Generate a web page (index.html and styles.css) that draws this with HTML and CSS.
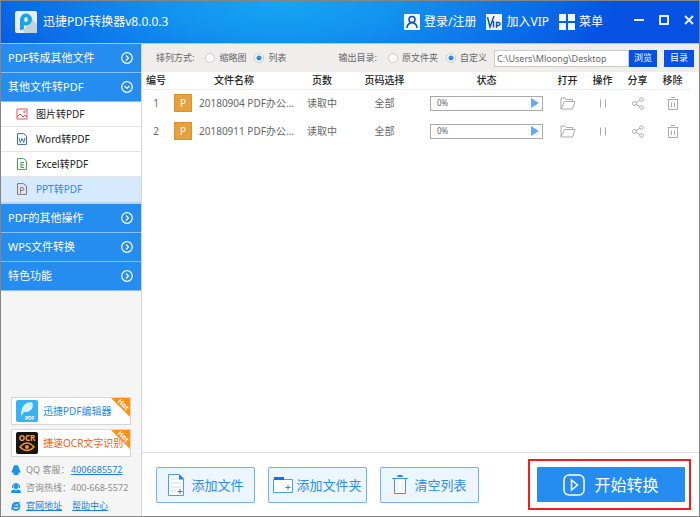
FILE: index.html
```html
<!DOCTYPE html>
<html lang="zh-CN">
<head>
    <meta charset="UTF-8">
    <meta name="viewport" content="width=device-width, initial-scale=1.0">
    <title>迅捷PDF转换器</title>
    <link rel="stylesheet" href="styles.css">
</head>
<body>
<!-- shared icons -->
<svg class="sprite" aria-hidden="true">
    <symbol id="right" viewBox="0 0 12 12"><circle cx="6" cy="6" r="5.3"/><path d="M5 3.5 7.5 6 5 8.5"/></symbol>
    <symbol id="down" viewBox="0 0 12 12"><circle cx="6" cy="6" r="5.3"/><path d="M3.5 5 6 7.5 8.5 5"/></symbol>
    <symbol id="open" viewBox="0 0 16 13"><path d="M1 12V1h4l1.500 1.500h6V4.500M1 12l3.500-7.500h10.500L12.500 12z"/></symbol>
    <symbol id="pause" viewBox="0 0 16 13"><path d="M5.500 2.500v8M10.500 2.500v8"/></symbol>
    <symbol id="share" viewBox="0 0 16 13"><circle cx="4.500" cy="6.500" r="2"/><circle cx="11.500" cy="2.500" r="1.800"/><circle cx="11.500" cy="10.500" r="1.800"/><path d="M6.300 5.600 9.900 3.400M6.300 7.500l3.700 2.100"/></symbol>
    <symbol id="trash" viewBox="0 0 16 13"><path d="M2.500 2.500h11M6 .5h4M3.500 2.500v10h9v-10M6.500 5.500V10M9.500 5.500V10"/></symbol>
    <symbol id="hot" viewBox="0 0 19 19"><path d="M0 0h19v19z" fill="#fb9214"/><text x="12.500" y="9" font-size="7" font-weight="bold" text-anchor="middle" fill="#fff" transform="rotate(45 12.500 6.500)">Hot</text></symbol>
</svg>
<div class="app">
    <header class="header">
        <svg class="logo" viewBox="0 0 22 22"><rect width="22" height="22" rx="2" fill="#e8f0f7"/><path d="m15 13 2-5 5 5v9H10l-2-3z" fill="#c3d1dd"/><path d="M5 19V8.500a6 6 0 1 1 7 6q-2 .5-3-.5v3q0 2-4 2z" fill="#18a5ec"/><ellipse cx="11" cy="8.500" rx="1.800" ry="2.500" fill="#e8f0f7"/></svg>
        <h1>迅捷PDF转换器v8.0.0.3</h1>
        <nav class="top-links">
            <a href="#"><svg width="16" height="16" viewBox="0 0 16 16"><path fill="#eef6ff" d="M0 0h16v16H0z"/><g fill="none" stroke="#104fae" stroke-width="1.500"><circle cx="8" cy="5.500" r="3"/><path d="M3 14q0-4.500 5-5.500 5 1 5 5.500"/></g></svg>登录/注册</a>
            <a href="#"><svg width="16" height="16" viewBox="0 0 16 16"><path fill="#eef6ff" d="M0 0h16v16H0z"/><path fill="none" stroke="#104fae" stroke-width="1.400" d="m1.500 3 2.500 10L8 2M7.500 7v6.500M10.500 14V8.500h2.500q2.500 1.500 0 3h-2.500"/></svg>加入VIP</a>
            <a href="#"><svg width="16" height="16" viewBox="0 0 16 16"><path fill="#eef6ff" d="M0 0h7v7H0zM9 0h7v7H9zM0 9h7v7H0zM9 9h7v7H9z"/></svg>菜单</a>
        </nav>
        <div class="window-buttons">
            <button aria-label="最小化"><svg viewBox="0 0 10 10"><path d="M0 5h10"/></svg></button>
            <button aria-label="最大化"><svg viewBox="0 0 10 10"><path d="M1 1h8v8H1z"/></svg></button>
            <button aria-label="关闭"><svg viewBox="0 0 10 10"><path d="m1 1 8 8M9 1 1 9"/></svg></button>
        </div>
    </header>

    <div class="body">
        <aside class="sidebar">
            <nav class="menu">
                <button class="menu-title">PDF转成其他文件<svg><use href="#right"/></svg></button>
                <button class="menu-title" aria-expanded="true">其他文件转PDF<svg><use href="#down"/></svg></button>
                <ul class="submenu">
                    <li><a href="#"><svg viewBox="0 0 12 12" stroke="#e0525a"><path d="M1 1h10v10H1zM1 9l3-3 3 3 2-2 2 2"/><circle cx="8.500" cy="3.800" r=".8"/></svg>图片转PDF</a></li>
                    <li><a href="#"><svg viewBox="0 0 12 12" stroke="#3d6cac"><path d="M1.500 11.400V.6h6L10.500 3v8.400zM3 5l1.300 4.500L6 5.500l1.700 4L9 5"/></svg>Word转PDF</a></li>
                    <li><a href="#"><svg viewBox="0 0 12 12" stroke="#43a552"><path d="M1.500 11.400V.6h6L10.500 3v8.400zM8 4.500H5v5h3M5 7h3"/></svg>Excel转PDF</a></li>
                    <li class="active"><a href="#"><svg viewBox="0 0 12 12" stroke="#8c7464"><path d="M1.500 11.400V.6h6L10.500 3v8.400zM4.500 10V4.500H7q2 1.500 0 3H4.500"/></svg>PPT转PDF</a></li>
                </ul>
                <button class="menu-title">PDF的其他操作<svg><use href="#right"/></svg></button>
                <button class="menu-title">WPS文件转换<svg><use href="#right"/></svg></button>
                <button class="menu-title">特色功能<svg><use href="#right"/></svg></button>
            </nav>

            <div class="side-bottom">
                <a class="promo" href="#">
                    <svg viewBox="0 0 22 22"><rect width="22" height="22" rx="2" fill="#36b3f5"/><path d="M5 16C5 6 9 2 16 2c3 6-2 11-8 10l5-6-8 10z" fill="#d9f2ff"/><text x="9" y="20" font-size="5" font-weight="bold" fill="#fff">PDF</text></svg>
                    <span>迅捷PDF编辑器</span>
                    <svg class="hot"><use href="#hot"/></svg>
                </a>
                <a class="promo ocr" href="#">
                    <svg viewBox="0 0 22 22"><rect width="22" height="22" rx="2" fill="#151515"/><text x="11" y="9" font-size="8" font-weight="bold" text-anchor="middle" fill="#f7a04b">OCR</text><path d="M4 15q7-8 14 0-7 7-14 0z" fill="none" stroke="#f7942d" stroke-width="1.500"/><circle cx="11" cy="15" r="2" fill="#f7942d"/></svg>
                    <span>捷速OCR文字识别</span>
                    <svg class="hot"><use href="#hot"/></svg>
                </a>
                <ul class="contact">
                    <li><svg viewBox="0 0 10 10"><path d="M5 0C3 0 2 1.500 2 3.500L.5 6.500 1 8l1-.5L3 9l-1 1h6L7 9l1-1.500 1 .5.500-1.500L8 3.500C8 1.500 7 0 5 0z"/></svg><span>QQ 客服：</span><a href="#">4006685572</a></li>
                    <li><svg viewBox="0 0 10 10"><circle cx="5" cy="3.500" r="2.500"/><path d="M0 10q0-3.500 3-3.500l2 1 2-1q3 0 3 3.500z"/><path d="M1.500 5V3Q2 .5 5 .5T8.500 3v2" fill="none" stroke="#1b95e8"/></svg><span>咨询热线：</span>400-668-5572</li>
                    <li><svg viewBox="0 0 10 10"><path d="M1 5.500h7.500Q8.500 2 5.200 2T1.600 5.500 5 9q2.500 0 3.300-2" fill="none" stroke="#1b95e8" stroke-width="1.800"/><path d="M.8 9Q-.5 6 9 .8" fill="none" stroke="#1b95e8"/></svg><a href="#">官网地址</a><a href="#">帮助中心</a></li>
                </ul>
            </div>
        </aside>

        <main class="main">
            <form class="toolbar">
                <span class="caption">排列方式:</span>
                <label><input type="radio" name="view">缩略图</label>
                <label><input type="radio" name="view" checked>列表</label>
                <span class="caption output">输出目录:</span>
                <label><input type="radio" name="output">原文件夹</label>
                <label><input type="radio" name="output" checked>自定义</label>
                <div class="path">
                    <input type="text" value="C:\Users\Mloong\Desktop" aria-label="输出目录">
                    <button type="button">浏览</button>
                </div>
                <button type="button">目录</button>
            </form>

            <div class="files">
                <table>
                    <colgroup><col class="num"><col><col class="pages"><col class="range"><col class="state"><col class="act"><col class="act"><col class="act"><col class="act"></colgroup>
                    <thead>
                        <tr><th>编号</th><th>文件名称</th><th>页数</th><th>页码选择</th><th>状态</th><th>打开</th><th>操作</th><th>分享</th><th>移除</th></tr>
                    </thead>
                    <tbody>
                        <tr>
                            <td>1</td>
                            <td><div class="file"><i>P</i><span>20180904 PDF办公...</span></div></td>
                            <td>读取中</td>
                            <td>全部</td>
                            <td><div class="progress">0%<svg viewBox="0 0 8 10"><path d="M0 0l8 5-8 5z"/></svg></div></td>
                            <td><button aria-label="打开"><svg><use href="#open"/></svg></button></td>
                            <td><button aria-label="暂停"><svg><use href="#pause"/></svg></button></td>
                            <td><button aria-label="分享"><svg><use href="#share"/></svg></button></td>
                            <td><button aria-label="移除"><svg><use href="#trash"/></svg></button></td>
                        </tr>
                        <tr>
                            <td>2</td>
                            <td><div class="file"><i>P</i><span>20180911 PDF办公...</span></div></td>
                            <td>读取中</td>
                            <td>全部</td>
                            <td><div class="progress">0%<svg viewBox="0 0 8 10"><path d="M0 0l8 5-8 5z"/></svg></div></td>
                            <td><button aria-label="打开"><svg><use href="#open"/></svg></button></td>
                            <td><button aria-label="暂停"><svg><use href="#pause"/></svg></button></td>
                            <td><button aria-label="分享"><svg><use href="#share"/></svg></button></td>
                            <td><button aria-label="移除"><svg><use href="#trash"/></svg></button></td>
                        </tr>
                    </tbody>
                </table>
            </div>

            <footer class="footer">
                <button class="action"><svg width="18" height="22" viewBox="0 0 18 22"><path d="M1.500.5h11l4 4v17h-15z" fill="#fff" stroke="#4a9eea"/><path d="M12 .5v5h5z" fill="#1c7fe8"/><path d="M4 5h6M4 9h10M4 13h10M4 17h5" stroke="#c4ddf5"/><path d="M13 15v5M10.500 17.500h5" stroke="#2187e7"/></svg>添加文件</button>
                <button class="action folder"><svg width="20" height="18" viewBox="0 0 20 18"><path d="M.5 3.500h19v13H.5z" fill="#fff" stroke="#4a9eea"/><path d="M1 1h10v3H1z" fill="#0d74e8"/><path d="M15 9v5M12.500 11.500h5" stroke="#2187e7"/></svg>添加文件夹</button>
                <button class="action"><svg width="16" height="20" viewBox="0 0 16 20"><path d="M2.500 3.500h11v15h-11z" fill="#fff"/><path d="M0 3.500h16M2.500 4v14.500h11V4" fill="none" stroke="#3b96ea"/><path d="M5.500 1h5" stroke="#2187e7" stroke-width="2"/><path d="M6 7v9M10 7v9" stroke="#d5e6f7"/></svg>清空列表</button>
                <div class="start-frame">
                    <button class="start"><svg width="22" height="22" viewBox="0 0 22 22" fill="none" stroke="#fff" stroke-width="1.500"><rect x="1" y="1" width="20" height="20" rx="5"/><path d="M8.500 6v10l6-5z"/></svg>开始转换</button>
                </div>
            </footer>
        </main>
    </div>
</div>
</body>
</html>
```
FILE: styles.css
```css
* {
    box-sizing: border-box;
}
body {
    margin: 0;
    font-family: "Noto Sans", "Noto Sans CJK SC", sans-serif;
    font-size: 10px;
    line-height: 14px;
    color: #666;
}
button, input {
    font: inherit;
    color: inherit;
    margin: 0;
    padding: 0;
    border: none;
    background: none;
}
button {
    cursor: pointer;
}
ul {
    list-style: none;
    margin: 0;
    padding: 0;
}
a {
    color: inherit;
    text-decoration: none;
}
.sprite {
    display: none;
}
.app {
    min-height: 100vh;
    display: flex;
    flex-direction: column;
    border: 1px solid #858585;
    background: #fff;
}

/* header */
.header {
    height: 42px;
    display: flex;
    align-items: center;
    padding: 0 5px 0 14px;
    background: radial-gradient(ellipse 340px 110px at 40% 0, #16a6f3, #1292ef 35%, #0b6de8 75%, #0650e2 100%);
    color: #fff;
    font-size: 12px;
}
.logo {
    width: 22px;
    height: 22px;
    margin-right: 6px;
}
h1 {
    margin: 0;
    font-size: 12px;
    font-weight: normal;
}
.top-links {
    display: flex;
    gap: 10px;
    margin-left: auto;
}
.top-links a {
    display: flex;
    align-items: center;
    gap: 4px;
}
.window-buttons {
    display: flex;
    gap: 15px;
    margin: 0 0 4px 31px;
}
.window-buttons svg {
    display: block;
    width: 10px;
    height: 10px;
    fill: none;
    stroke: #e4efff;
    stroke-width: 2;
}

.body {
    flex: 1;
    display: flex;
    border-top: 1px solid #a9c6f2;
}

/* sidebar */
.sidebar {
    width: 141px;
    flex: none;
    display: flex;
    flex-direction: column;
    border-right: 1px solid #d6d6d6;
    background: #f5f5f5;
}
.menu-title {
    display: flex;
    align-items: center;
    justify-content: space-between;
    width: 100%;
    height: 29px;
    padding: 0 8px 0 7px;
    background: #258cf0;
    border-bottom: 1px solid #86bff5;
    color: #fff;
    font-size: 11px;
}
.menu-title svg {
    width: 12px;
    height: 12px;
    fill: none;
    stroke: #fff;
    stroke-width: 1.2;
}
.submenu {
    border-bottom: 2px solid #c5d3e0;
}
.submenu li {
    height: 25px;
    border-bottom: 1px solid #e5e5e5;
    background: #fff;
    color: #222;
}
.submenu a {
    display: flex;
    align-items: center;
    gap: 8px;
    height: 100%;
    padding-left: 15px;
}
.submenu svg {
    width: 12px;
    height: 12px;
    fill: none;
}
.submenu .active {
    border-color: #d7eafd;
    background: #d7eafd;
    color: #258cf0;
}
.side-bottom {
    margin-top: auto;
    padding: 0 10px 1px;
}
.promo {
    position: relative;
    display: flex;
    align-items: center;
    gap: 5px;
    height: 28px;
    margin-bottom: 4px;
    padding-left: 4px;
    border: 1px solid #d6d6d6;
    background: #fff;
    color: #258cf0;
    white-space: nowrap;
}
.promo svg {
    width: 22px;
    height: 22px;
    flex: none;
}
.ocr {
    color: #f5601a;
}
.promo .hot {
    position: absolute;
    top: 0;
    right: 0;
    width: 19px;
    height: 19px;
}
.contact {
    font-size: 9px;
    color: #8c8c8c;
}
.contact li {
    display: flex;
    align-items: center;
    height: 18px;
}
.contact svg {
    width: 10px;
    height: 10px;
    margin-right: 5px;
    fill: #1b95e8;
}
.contact span {
    width: 45px;
}
.contact a {
    color: #1a7fe6;
    text-decoration: underline;
}
.contact a + a {
    margin-left: 10px;
}

/* main */
.main {
    flex: 1;
    min-width: 0;
    display: flex;
    flex-direction: column;
}
.toolbar {
    display: flex;
    align-items: center;
    height: 28px;
    padding: 0 5px 0 14px;
    background: #efeeed;
    font-size: 9px;
    white-space: nowrap;
}
.toolbar label {
    display: flex;
    align-items: center;
    gap: 4px;
    margin-left: 8px;
}
.toolbar .caption {
    margin-right: 3px;
}
.toolbar .output {
    margin-left: auto;
}
.toolbar input[type=radio] {
    appearance: none;
    width: 10px;
    height: 10px;
    border: 1px solid #ccc;
    border-radius: 50%;
    background: #fff;
}
.toolbar input[type=radio]:checked {
    background: radial-gradient(circle, #258cf0 2px, #fff 3px);
}
.path {
    display: flex;
    margin: 0 7px;
}
.path input {
    width: 135px;
    height: 17px;
    padding: 0 2px;
    border: 1px solid #ccc;
    background: #fff;
}
.toolbar button {
    height: 17px;
    padding: 0 5px;
    background: #0650e2;
    color: #fff;
}
.toolbar > button {
    padding: 0 6px;
}
.files {
    flex: 1;
    padding-right: 9px;
}
table {
    width: 100%;
    table-layout: fixed;
    border-collapse: collapse;
    text-align: center;
}
.num {
    width: 28px;
}
.pages {
    width: 48px;
}
.range {
    width: 77px;
}
.state {
    width: 127px;
}
.act {
    width: 35px;
}
th, td {
    padding: 0;
}
th {
    height: 17px;
    border-bottom: 1px solid #eee;
    color: #222;
    font-weight: 500;
}
td {
    height: 28px;
}
.file {
    display: flex;
    align-items: center;
    gap: 7px;
    padding-left: 4px;
    white-space: nowrap;
}
.file i {
    width: 18px;
    height: 18px;
    border: 1px solid #dd9228;
    background: #e6a040;
    color: #fff;
    font-style: normal;
    line-height: 16px;
}
.progress {
    display: flex;
    align-items: center;
    justify-content: space-between;
    height: 15px;
    margin: 0 7px;
    padding: 0 3px 0 6px;
    border: 1px solid #aaa;
    font-size: 8px;
}
.progress svg {
    width: 8px;
    height: 10px;
    fill: #62acf5;
}
td button {
    display: block;
    margin: 0 auto;
}
td button svg {
    display: block;
    width: 16px;
    height: 13px;
    fill: none;
    stroke: #aaa;
}
.footer {
    display: flex;
    align-items: center;
    gap: 13px;
    height: 64px;
    padding: 0 8px 0 14px;
    border-top: 1px solid #ddd;
}
.action {
    display: flex;
    align-items: center;
    justify-content: center;
    gap: 6px;
    width: 99px;
    height: 36px;
    border: 1px solid #6fb1f2;
    border-radius: 2px;
    background: #edf5fe;
    color: #2c8eea;
    font-size: 13px;
    white-space: nowrap;
}
.folder {
    gap: 3px;
}
.start-frame {
    margin-left: auto;
    padding: 6px 4px 6px 7px;
    border: 2px solid #f01e1e;
}
.start {
    display: flex;
    align-items: center;
    justify-content: center;
    gap: 9px;
    width: 148px;
    height: 35px;
    border-radius: 1px;
    background: #258cf0;
    color: #fff;
    font-size: 16px;
}
```
